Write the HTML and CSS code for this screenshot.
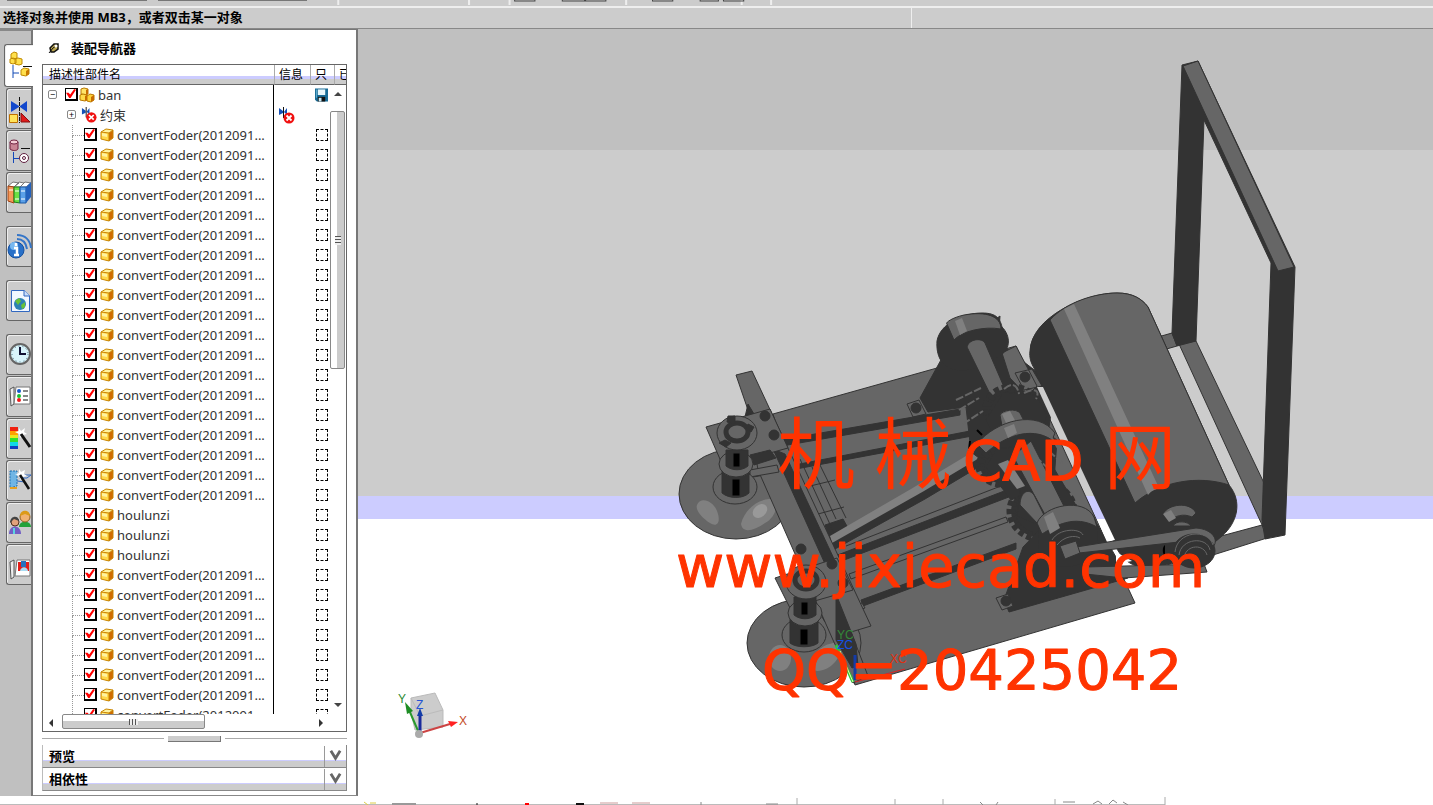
FILE: index.html
```html
<!DOCTYPE html>
<html lang="zh-CN">
<head>
<meta charset="utf-8">
<title>装配导航器</title>
<link rel="stylesheet" href="styles.css">
<script src="script.js" defer></script>
</head>
<body>
<svg class="sprites" aria-hidden="true">
  <symbol id="cube" viewBox="0 0 14 14">
    <path d="M1 4 6 1l7 1-4 3z" fill="#fff3a0"/><path d="M1 4l8 1v8l-8-2z" fill="#ffd84a"/><path d="M9 5l4-3v8l-4 3z" fill="#d06a00"/>
    <path d="M1 4 6 1l7 1v8l-4 3-8-2zM1 4l8 1 4-3M9 5v8" fill="none" stroke="#c98500"/>
    <path d="M2 5l5 1v3l-5-1z" fill="#fff3a0"/>
  </symbol>
  <symbol id="cubes" viewBox="0 0 16 16">
    <g stroke="#b87800"><path d="M2 2l3-1 4 1v5l-2 1-5-1z" fill="#ffe46a"/><path d="M1 8l3-1 4 1v5l-2 1-5-1z" fill="#ffdb4a"/><path d="M8 9l3-2 4 1v5l-3 2-4-1z" fill="#ffd23a"/></g>
    <path d="M7 3l2-1v5l-2 1zM6 9l2-1v5l-2 1zM12 10l3-2v5l-3 2z" fill="#c86c00"/>
  </symbol>
  <symbol id="constraint" viewBox="0 0 17 17">
    <path d="M1 1l4 3v2l-4 2zM9 1v7L6 5z" fill="#1450b8"/><path d="M5.500 0v11" stroke="#111" fill="none"/>
    <circle cx="11" cy="11" r="5.500" fill="#f01010"/><path d="M8.500 8.500l5 5m0-5l-5 5" stroke="#fff" stroke-width="1.800"/>
  </symbol>
  <symbol id="disk" viewBox="0 0 14 14">
    <path d="M0 0h14v14H2l-2-2z" fill="#176b96"/><path d="M3 1h8v6H3z" fill="#e8f7fb"/><path d="M3 9h8v5H3z" fill="#111"/><path d="M4 10h3v4H4z" fill="#c8e8f2"/><path d="M1 1h1v9H1z" fill="#69b4d4"/>
  </symbol>
  <symbol id="chevron" viewBox="0 0 14 12"><path d="M2 1l5 8 5-8" fill="none" stroke="#666" stroke-width="3"/></symbol>
</svg>

<div class="toolbar"><span class="combo"></span><span class="combo combo-wide"></span>
  <svg class="toolbar-marks" viewBox="0 0 1100 5" preserveAspectRatio="xMinYMin slice" aria-hidden="true"><path d="M20 0v5M149 0v5M189 0v5M304 0v5M418 0v5M447 0v5" stroke="#eee" stroke-width="2"/><path d="M194 0v1h20V0M241 0v1h22V0M264 0v1h20V0M330 0v1h20V0M377 0v1h18V0M400 0v1h20V0" fill="none" stroke="#444"/></svg>
</div>
<div class="status"><span class="prompt">选择对象并使用 MB3，或者双击某一对象</span><span class="status-right"></span></div>

<main class="workspace">
  <nav class="rail">
    <button class="tab active" aria-label="装配导航器"><svg viewBox="0 0 26 30"><path d="M5 14v13M5 22h6" stroke="#124bb5" fill="none"/><path d="M15 15.500h9" stroke="#111"/><g stroke="#c08a00" fill="#ffe04c"><path d="M3 3l3-2 3 1v5l-3 1-3-1zM7 8l3-1 4 1v5l-3 1-4-1zM2 8l3-1 3 1v4l-3 1-3-1zM13 19l3-2 5 1v5l-3 2-5-1z"/></g><path d="M18 20l3-2v5l-3 2z" fill="#c87800"/></svg></button>
    <button class="tab" aria-label="约束导航器"><svg viewBox="0 0 26 30"><path d="M4 7l8 5v1l-8 5zM20 7v11l-7-5v-1z" fill="#1248cc"/><path d="M12.500 3v26" stroke="#111" stroke-dasharray="4 1"/><path d="M2.500 20.500h8v8h-8z" fill="#ffe45a" stroke="#c07000"/><path d="M14 19v9h9z" fill="#e01a1a" stroke="#811"/></svg></button>
    <button class="tab" aria-label="部件导航器"><svg viewBox="0 0 26 30"><path d="M3 6v7c2 2 7 2 8 0V6" fill="#c88494" stroke="#702040"/><ellipse cx="7" cy="6" rx="4" ry="2" fill="#f4cdd6" stroke="#702040"/><path d="M14 12.500h9" stroke="#111"/><path d="M6.500 16v11M7 22.500h5" stroke="#1448b8" fill="none"/><circle cx="17" cy="22" r="4.500" fill="#fff" stroke="#602040"/><circle cx="17" cy="22" r="1.500" fill="none" stroke="#602040"/></svg></button>
    <button class="tab" aria-label="重用库"><svg viewBox="0 0 26 30"><path d="M1 8l5-4 6 1-5 4zM7 9l5-5 5 1-4 4zM13 9l5-5 6 1-5 4z" fill="#fff" stroke="#777"/><path d="M1 8l6 1v16l-6-2z" fill="#f59a5a" stroke="#a04010"/><path d="M7 9h6v16l-6-1z" fill="#6be044" stroke="#188018"/><path d="M13 9h6v16h-6z" fill="#5ba0e8" stroke="#1b58a4"/><path d="M19 9l5-5v15l-5 6z" fill="#2462bd"/><path d="M2 12h4m2 1h4m2 0h4m-4 8h4M8 21h4" stroke="#fff"/></svg></button>
    <button class="tab spaced" aria-label="HD3D 工具"><svg viewBox="0 0 26 30"><circle cx="9" cy="18" r="8" fill="#2870c8" stroke="#1550a0"/><circle cx="7" cy="14" r="4" fill="#77b8f0"/><path d="M9 11v3M7 16h3v7M7 23h5" stroke="#fff" stroke-width="2.500" fill="none"/><path d="M10 7c6 0 9 4 10 10M10 3c8 0 13 5 14 13" stroke="#3475c8" stroke-width="2" fill="none"/></svg></button>
    <button class="tab spaced" aria-label="Web 浏览器"><svg viewBox="0 0 26 30"><path d="M4.500 4.500h13l5 5v16h-18z" fill="#f0f7ff" stroke="#3268c0"/><path d="M17 4v6h6" fill="#c8dcf8" stroke="#3268c0"/><circle cx="13" cy="18" r="6" fill="#2d82b4"/><path d="M8 15l4-3 2 3-3 4zM14 19l4-3v5l-3 2z" fill="#68c238"/></svg></button>
    <button class="tab spaced" aria-label="历史记录"><svg viewBox="0 0 26 30"><circle cx="13" cy="14" r="10" fill="#d8f4fb" stroke="#666" stroke-width="2"/><circle cx="13" cy="14" r="8" fill="none" stroke="#467" stroke-dasharray="1 3"/><path d="M13 7v7h6" stroke="#113" stroke-width="2" fill="none"/></svg></button>
    <button class="tab" aria-label="系统材料"><svg viewBox="0 0 26 30"><path d="M3 7l4-2v17l-3 2z" fill="#eee" stroke="#555"/><path d="M9 5h14v17H7z" fill="#fff" stroke="#777"/><circle cx="12" cy="9" r="2" fill="#1459ca"/><circle cx="12" cy="14" r="2" fill="#18c030"/><circle cx="12" cy="18" r="2" fill="#f01818"/><path d="M16 9h5m-5 5h5m-5 4h5" stroke="#111"/></svg></button>
    <button class="tab" aria-label="可视化模板"><svg viewBox="0 0 26 30"><path d="M3 3h8v5H3z" fill="#f02010"/><path d="M3 7h8v4H3z" fill="#ffa000"/><path d="M3 11h8v4H3z" fill="#e8e820"/><path d="M3 14h8v4H3z" fill="#30e030"/><path d="M3 18h8v4H3z" fill="#10d8e8"/><path d="M3 22h8v3H3z" fill="#1040c0"/><path d="M12 4l2 3 4-3-1 4 3 2-4 1-3 3-1-4-4-2 4-1z" fill="#fff"/><path d="M14 10l9 13" stroke="#111" stroke-width="3"/></svg></button>
    <button class="tab" aria-label="加工向导"><svg viewBox="0 0 26 30"><path d="M3 5h7v15l-7 2z" fill="#70b5e4" stroke="#1e70b0" stroke-dasharray="2 1"/><path d="M11 9h13l-4 3h-8M10 15l8 1" stroke="#3068c0" fill="none"/><path d="M12 3l2 3 4-2-1 4 3 2-4 1-3 3-1-4-4-2 4-1z" fill="#fff"/><path d="M13 9l9 14" stroke="#111" stroke-width="2.500"/><path d="M3 22h7" stroke="#e7a020" stroke-width="2"/></svg></button>
    <button class="tab" aria-label="角色"><svg viewBox="0 0 26 30"><path d="M12 19c0-7 12-7 12 0z" fill="#23a23a"/><circle cx="18" cy="9" r="5" fill="#f0b272" stroke="#956020"/><path d="M13 8c0-7 10-7 10 0l-5-2z" fill="#dc9a18"/><path d="M2 26c0-10 12-10 12 0z" fill="#725fc4"/><path d="M7 20v6" stroke="#5bd4e0" stroke-width="2"/><circle cx="8" cy="14" r="4" fill="#e2a27c" stroke="#523020"/><path d="M3 15c0-8 9-8 9-2l-5-2z" fill="#444"/></svg></button>
    <button class="tab" aria-label="系统场景"><svg viewBox="0 0 26 30"><path d="M3 12l4-2v17l-3 2z" fill="#eee" stroke="#555"/><path d="M10 10h13v16H8z" fill="#fff" stroke="#777"/><path d="M11 12h11v9H11z" fill="#e31d18"/><path d="M14 11h5v6h-5z" fill="#2671bd"/><path d="M13 21c1-5 7-5 8 0z" fill="#a8ddf4"/></svg></button>
  </nav>

  <section class="panel">
    <h1 class="panel-title"><svg viewBox="0 0 12 12" aria-hidden="true"><path d="M2 6l4-4h4v5L6 10H3z" fill="#bba650" stroke="#111" stroke-width="1.500"/><path d="M1 11l4-5 3-2" stroke="#111" fill="none"/><circle cx="8" cy="4" r="1.500" fill="#fff"/></svg>装配导航器</h1>
    <div class="tree-box">
      <div class="tree-view">
        <table class="tree">
          <colgroup><col class="c-name"><col class="c-info"><col class="c-read"><col></colgroup>
          <thead><tr><th>描述性部件名</th><th>信息</th><th>只</th><th>已</th></tr></thead>
          <tbody id="rows"></tbody>
        </table>
        <div class="vscroll"><button class="arrow up" aria-label="向上"></button><div class="vthumb"><i></i></div><button class="arrow down" aria-label="向下"></button></div>
      </div>
      <div class="hscroll"><button class="arrow left" aria-label="向左"></button><div class="htrack"><div class="hthumb"><i></i></div></div><button class="arrow right" aria-label="向右"></button></div>
    </div>
    <div class="splitter"><span></span><b></b><span></span></div>
    <div class="sections">
      <button class="section"><span>预览</span><svg><use href="#chevron"/></svg></button>
      <button class="section"><span>相依性</span><svg><use href="#chevron"/></svg></button>
    </div>
  </section>

  <section class="viewport">
    <svg class="scene" viewBox="358 29 1075 768" preserveAspectRatio="xMinYMin meet">
      <!-- handle frame -->
      <g class="edge">
        <path class="m" d="M1179 344l17-3 68 142-1 44z"/>
        <path class="m" d="M1158 337l14-4 5 13-14 4zM1210 539l52-14 5 13-54 17z"/>
        <path class="d" d="M1182 65l16-4 97 206-10 268-20 4-3-19 9-257-67-143-8 221-19 5-5-13z"/>
        <path class="m" d="M1183 66l15-5 96 206-16 4z"/>
      </g>
      <!-- base plate -->
      <g class="edge">
        <path class="m" d="M773 414l164-46 79-22 119 257-58 17-222 65z"/>
        <circle class="d" cx="916" cy="408" r="5"/><path class="n" d="M907 404l12-4 7 14-13 3z"/>
      </g>
      <!-- front wheels -->
      <g class="edge">
        <ellipse class="m" cx="736" cy="494" rx="57" ry="45"/><ellipse class="m" cx="804" cy="643" rx="57" ry="44"/>
      </g>
      <g class="h"><path d="M697 505c4-9 16-4 20 6s1 17-7 12-15-13-13-18zM741 524c3-13 15-24 28-25 12-1 8 18-4 24-9 6-22 12-24 1z"/><ellipse cx="780" cy="658" rx="11" ry="13"/><path d="M811 665c2-14 15-23 26-22 9 7-2 24-14 27-7 2-12 1-12-5z"/></g>
      <ellipse cx="760" cy="511" rx="8" ry="6" fill="#999" transform="rotate(-40 760 511)"/>
      <!-- rods and belts -->
      <g class="edge">
        <path class="n" d="M806 487l29-7M818 514l26-7M819 463l27 55M812 467l24 52"/>
        <path class="d" d="M825 525l18-6 5 9-18 12z"/>
        <path class="d" d="M780 440l180-31v6l-178 31zM748 474l222-43 2 5-224 42zM835 556l177-68 2 7-175 67zM861 600l155-57v6l-153 57z"/>
        <path class="d" d="M832 540l85-45 86-52 4 7-82 49-90 50z"/>
        <path class="h" d="M830 536l81-47 90-54 5 7-82 49-92 52z"/>
        <path class="m" d="M849 574l157-57 2 5-157 57zM822 617l40-14 3 5-40 14z"/>
        <path class="n" d="M846 546l160-62"/>
      </g>
      <!-- left rail -->
      <g class="edge">
        <path class="m" d="M736 375l16-4 119 255-20 6 17 44-15 7-20-43-75-170-10-60z"/>
        <path class="d" d="M773 449l12 5 50 107-9 5zM836 594l20 50 2 22-6 2-16-28zM748 404l9 15-12-2z"/>
        <path class="n" d="M800 459l34 74"/>
      </g>
      <!-- caster heads -->
      <g class="edge">
        <path class="m" d="M706 427l64-18 18 39-65 18z"/><circle class="d" cx="765" cy="416" r="5"/><circle class="d" cx="774" cy="435" r="5"/>
        <path class="d" d="M750 455l20-5 6 8-22 7z"/>
        <path class="m" d="M750 470l27-5 2 7-29 5z"/>
        <ellipse class="m" cx="735" cy="487" rx="22" ry="17"/><path class="d" d="M722 470h27v23c-6 6-20 6-27 0z"/>
        <ellipse class="m" cx="736" cy="464" rx="17" ry="13"/><path class="d" d="M726 450h22v16c-6 5-16 5-22 0z"/>
        <path d="M733 453h7v14h-7zM732 479h8v17h-8z" fill="#000"/>
        <ellipse class="m" cx="737" cy="433" rx="20" ry="17"/><ellipse class="n heavy" cx="737" cy="432" rx="11" ry="9"/><path class="d" d="M728 416h7v8l-8-2zM748 424l6 3-3 5-5-3zM725 440l-6 3 7 4 5-4z"/>
      </g>
      <g class="edge">
        <path class="m" d="M775 578l62-20 16 32-63 18z"/><circle class="d" cx="801" cy="549" r="5"/><circle class="d" cx="832" cy="564" r="5"/><circle class="d" cx="843" cy="583" r="5"/>
        <ellipse class="m" cx="804" cy="635" rx="22" ry="17"/><path class="d" d="M790 618h28v25c-6 5-22 5-28 0z"/>
        <ellipse class="m" cx="805" cy="613" rx="17" ry="13"/><path class="d" d="M794 597h22v18c-6 5-16 5-22 0z"/>
        <path d="M801 602h7v13h-7zM800 629h8v16h-8z" fill="#000"/>
        <ellipse class="m" cx="806" cy="582" rx="20" ry="17"/><ellipse class="n heavy" cx="806" cy="580" rx="11" ry="9"/>
      </g>
      <!-- upper bearing, shafts and gears -->
      <g class="edge">
        <path class="d" d="M942 358l-22 40 8 14 38-5 5 45 32 24 42-20 7-50-10-30-36-28-8-4 2-28z"/>
        <path class="m" d="M1002 353l14-7 21 40-10 10-17-18zM1015 373l17-4 10 17-18 4z"/><circle class="d" cx="1025" cy="377" r="5"/>
        <path class="d" d="M937 341c3-17 25-28 45-28 15 0 18 6 20 14 9 9 8 22 0 27-14 9-28 18-45 16-16-2-21-15-20-29z"/>
        <path class="m" d="M954 340c8-9 30-14 47-11 0-13-15-18-37-14-13 3-19 8-17 9z"/>
        <path class="h" d="M955 321l7-3 5 13-7 4z"/>
        <path class="m" d="M967 347c2-9 16-9 18-4l22 51-14 6z"/>
      </g>
      <g class="gear">
        <ellipse cx="1012" cy="408" rx="25" ry="20"/><ellipse cx="1002" cy="466" rx="22" ry="17"/><ellipse cx="1042" cy="511" rx="31" ry="27"/>
      </g>
      <g class="edge">
        <path class="d" d="M1004 392l32 3 11 20-11 31-36 2-14-28zM1003 438l31-14 23 16-3 41-43 19-25-33zM1022 472l27-12 31 52-28 19-35-15z"/>
        <path class="m" d="M1000 415c2-5 16-7 20-2l9 18-25 6z"/><path class="h" d="M1002 414l8-3 9 17-9 4z"/>
        <path class="m" d="M977 444c19-24 61-35 78-11l-3 7c-22-15-50-2-66 13z"/><path class="h" d="M1004 428l10-4 3 9-9 5z"/>
        <path class="m" d="M1013 456l18-15 39 77-15 15z"/><path class="h" d="M998 464l10-4 17 26-8 3z"/>
        <path class="m" d="M1020 505c0-12 8-18 14-10l11 22-8 6z"/>
      </g>
      <path class="strands" d="M956 400l25-12M959 410l20-12M963 424l20-13M1028 450l22 20M1025 460l19 19M1050 435l9 15M1049 451l14 13"/>
      <path class="strands" d="M1004 389c8-7 13-5 15 5M1024 393c12-6 16-2 12 6"/>
      <path d="M977 430l5 5m-12 6l-2 18" fill="none" stroke="#000" stroke-width="2"/>
      <!-- lower bearing -->
      <g class="edge">
        <path class="d" d="M1023 547l-19 53 5 12 119-34-31-54-38-14z"/>
        <path class="m" d="M996 598l12-4 5 12-11 4z"/><circle class="d" cx="1006" cy="601" r="5"/>
        <path class="d" d="M1038 523c9-18 42-24 56-6 6 11 5 36-6 43-19 12-44 7-49-6z"/>
        <path class="m" d="M1037 523c7-18 47-26 57-6l3 10c-23-13-42-1-55 7z"/><path class="h" d="M1044 517l9-5 7 16-10 6z"/>
        <path class="n light" d="M1052 540c7-12 28-12 31-5M1057 545c7-9 18-10 23-7"/>
      </g>
      <!-- motor drum -->
      <g class="edge">
        <path class="d" d="M1030 351c1-33 54-58 87-58 16 0 25 6 31 14l81 178c14 17 8 38-7 51-19 17-43 29-70 31-18 2-29-6-36-20L1034 368c-3-5-5-11-4-17z"/>
        <path class="m" d="M1050 320c16-18 46-27 67-27 16 0 25 6 31 14l81 178c-30-10-69-4-94 18z"/>
        <path class="h" d="M1064 309l10-5 85 184c-5 2-8 3-11 7z"/>
        <path class="m" d="M1163 514c5-10 27-13 33-1l-4 4c-9-4-17-1-23 4z"/><path class="h" d="M1163 514l8-4 5 8-7 4z"/>
        <path class="m" d="M1173 526c3-6 15-5 18 0z"/>
      </g>
      <path d="M1037 387h6l51 109h-7z" fill="#ccc"/><path d="M1087 496h7l11 23h-8z" fill="#ccf"/><path d="M1097 519h8l10 21-8 2z" fill="#fff"/>
      <path d="M1116 552l16 9-16 3z" fill="#fff"/>
      <!-- drive belt -->
      <g class="edge">
        <path class="m" d="M1070 548l126-20c17 1 24 13 16 20l-6-9-127 14zM1085 567l119-3 3 8-83 6-39-4z"/>
        <ellipse class="d" cx="1194" cy="551" rx="21" ry="17"/><path class="n light" d="M1175 552c2-21 33-24 38-7M1179 555c2-17 28-19 31-5M1184 557c3-13 20-13 23-2"/>
        <path class="m" d="M1060 546l16-5 4 12-15 6z"/>
        <path d="M1165 545c-3 2-3 9 0 11z" fill="#000" class="black"/>
      </g>
      <!-- work axes -->
      <path d="M853 682l-17-37" stroke="#2bc838" stroke-width="3"/><path d="M853 682l-13-31" stroke="#e6ffb0"/><path d="M855 680v-25" stroke="#143ba8" stroke-width="3"/><path d="M855 682l50-13" stroke="#d22"/>
      <g class="axis-label"><text x="837" y="639" fill="#338838">YC</text><text x="837" y="649" fill="#1450e8">ZC</text><text x="890" y="663" fill="#e03010">XC</text></g>
      <!-- view triad -->
      <path d="M411 698l24-5 8 17v17l-28 3-4-18z" fill="#ccc" stroke="#bbb"/><path d="M411 698l9 18 23-6M420 716v13" fill="none" stroke="#bbb"/>
      <path d="M419 733l-10-23" stroke="#2a9a2e" stroke-width="2"/><path d="M405 702l8 9-6 3z" fill="#1d8d24"/>
      <path d="M420 733l30-9" stroke="#c44" stroke-width="2"/><path d="M458 722l-10-1 3 6z" fill="#f22"/>
      <path d="M420 732v-18" stroke="#1a2a9c" stroke-width="3"/><path d="M420 708l3 8h-6z" fill="#123ca8"/><circle cx="419" cy="734" r="4" fill="#aaa"/>
      <g class="triad-label"><text x="398" y="703" fill="#2c8a30">Y</text><text x="416" y="709" fill="#2453d4">Z</text><text x="459" y="725" fill="#c44a28">X</text></g>
      <!-- watermark -->
      <g class="watermark"><text class="han" x="777" y="483">机</text><text class="han" x="874" y="483">械</text><text class="cad" x="963" y="480">CAD</text><text class="wang" x="1104" y="483">网</text>
        <text class="site" x="676" y="587">www.jixiecad.com</text><text class="qq" x="762" y="689">QQ=20425042</text></g>
    </svg>
  </section>
</main>
<footer class="bottom-strip"><svg viewBox="0 0 1433 8" preserveAspectRatio="xMinYMax slice" aria-hidden="true"><path d="M0 7.500h1165" stroke="#bbb"/><path d="M392 6h24v2h-24z" fill="#999"/><path d="M364 5l4 3m2-2h6" stroke="#dc4"/><path d="M477 6v2" stroke="#111"/><path d="M525 7h4" stroke="#f00" stroke-width="2"/><path d="M576 7h8" stroke="#111" stroke-width="2"/><path d="M600 6h18m14 0h18" stroke="#c99"/><path d="M797 1v7m98-6v6m48-6v6m112-6v6m110-8v8" stroke="#aaa"/><path d="M701 5v3m65-1h12m202-2l3 3m15-3l-2 3M1063 5h12m18 2l5-3 4 3m7 0l4-4 4 3m6-1l5 3" stroke="#888" fill="none"/></svg></footer>
</body>
</html>
```
FILE: styles.css
```css
* { box-sizing: border-box; }
body { margin: 0; height: 100vh; display: flex; flex-direction: column; overflow: hidden; background: #fff; color: #333; font: 13px/20px "Noto Sans", "Noto Sans CJK SC", sans-serif; }
button { font: inherit; color: inherit; padding: 0; margin: 0; border: 0; background: none; }
.sprites { display: none; }

.toolbar { flex: none; height: 6px; display: flex; gap: 11px; padding-left: 7px; background: #ccc; }
.combo { width: 140px; height: 1px; background: #777; }
.combo-wide { width: 149px; }
.toolbar-marks { flex: 1; min-width: 0; height: 5px; }
.status { flex: none; height: 23px; display: flex; align-items: stretch; background: #ccc; border-top: 2px solid #eee; border-bottom: 1px solid #888; color: #000; font-weight: bold; }
.prompt { flex: 0 0 912px; padding-left: 3px; line-height: 18px; border-right: 1px solid #eee; }

.workspace { flex: 1; min-height: 0; display: grid; grid-template-columns: 33px 325px minmax(0, 1fr); }
.rail { background: #c0c0c0; border-top: 2px solid #888; border-right: 2px solid #777; display: flex; flex-direction: column; align-items: flex-end; gap: 1px; padding-top: 13px; margin-bottom: 1px; }
.tab { flex: none; width: 25px; height: 41px; background: #ccc; border: 1px solid #666; border-right: 0; border-radius: 3px 0 0 3px; box-shadow: inset 1px 1px #eee; }
.tab svg { display: block; width: 26px; height: 30px; }
.tab.active { width: 29px; height: 43px; margin-right: -2px; padding-left: 3px; background: #fff; }
.tab.spaced { margin-top: 12px; }

.panel { display: flex; flex-direction: column; min-height: 0; padding: 0 9px 4px; margin-bottom: 1px; border-top: 1px solid #777; border-right: 2px solid #777; border-bottom: 1px solid #888; background: #fff; }
.panel-title { flex: none; height: 34px; margin: 0; padding: 8px 0 0 6px; display: flex; align-items: flex-start; gap: 11px; font-size: 13px; line-height: 20px; color: #000; }
.panel-title svg { width: 12px; height: 12px; margin-top: 4px; }
.tree-box { flex: 1; min-height: 0; display: flex; flex-direction: column; border: 1px solid #666; }
.tree-view { flex: 1; min-height: 0; position: relative; overflow: hidden; }
.tree { width: 100%; table-layout: fixed; border-collapse: separate; border-spacing: 0; }
.tree .c-name { width: 231px; } .tree .c-info { width: 36px; } .tree .c-read { width: 24px; }
.tree th { height: 20px; padding: 0 0 0 6px; overflow: hidden; text-align: left; white-space: nowrap; font-size: 12px; line-height: 19px; font-weight: normal; color: #000; background: linear-gradient(#fff 0 11px, #ccf 11px 14px, #ccc 14px); border-bottom: 1px solid #666; }
.tree th + th { padding-left: 4px; border-left: 1px solid #aaa; }
.tree td { height: 20px; padding: 0; vertical-align: top; }
.tree td:first-child { border-right: 1px solid #000; }
.node { display: flex; align-items: center; height: 19px; white-space: nowrap; }
.node svg { flex: none; width: 14px; height: 14px; margin: 0 3px; }
.node .wide { width: 16px; height: 16px; margin: 0 3px 0 1px; }
.stem { flex: none; align-self: flex-start; width: 41px; height: 20px; padding-left: 29px; }
.stem::before { content: ""; display: block; height: 10px; border-left: 1px dotted #999; border-bottom: 1px dotted #999; }
.stem::after { content: ""; display: block; height: 10px; border-left: 1px dotted #999; }
.twist { flex: none; width: 9px; height: 9px; border: 1px solid #888; border-radius: 2px; line-height: 7px; font-size: 9px; text-align: center; color: #000; margin-left: 5px; }
.twist + input { margin-left: 8px; }
.twist.deep { margin-left: 24px; margin-right: 4px; }
.check { appearance: none; flex: none; width: 13px; height: 13px; margin: 0; border: 2px solid #000; border-width: 1px 2px 2px 1px; background: #fff; }
.check::before { content: ""; display: block; width: 10px; height: 9px; background: #f00; clip-path: polygon(0 42%, 26% 42%, 42% 62%, 82% 0, 100% 8%, 46% 100%, 32% 100%); }
.read { appearance: none; display: block; width: 12px; height: 12px; margin: 4px 0 0 6px; border: 1px dashed #000; }
.info { display: block; width: 17px; height: 17px; margin: 2px 0 0 4px; }
.disk { display: block; width: 13px; height: 14px; margin: 3px 0 0 5px; }

.vscroll { position: absolute; top: 20px; right: 0; bottom: 0; width: 17px; display: flex; flex-direction: column; align-items: center; background: #fff; }
.vthumb { flex: 0 0 258px; width: 15px; margin-top: 8px; display: flex; align-items: center; justify-content: center; border: 1px solid #888; border-radius: 2px; background: linear-gradient(90deg, #fff 0 6px, #ccc 6px); }
.vthumb i { width: 6px; height: 9px; background: repeating-linear-gradient(#555 0 1px, #eee 1px 3px); }
.arrow { flex: none; width: 16px; height: 18px; display: grid; place-items: center; }
.arrow::before { content: ""; border: 4px solid transparent; }
.up::before { border-bottom-color: #444; border-top: 0; } .down::before { border-top-color: #444; border-bottom: 0; } .left::before { border-right-color: #333; border-left: 0; } .right::before { border-left-color: #333; border-right: 0; }
.down { margin-top: auto; }
.hscroll { flex: none; height: 17px; display: flex; padding-right: 17px; }
.htrack { flex: 1; padding-left: 3px; }
.hthumb { width: 143px; height: 15px; display: flex; align-items: center; justify-content: center; border: 1px solid #888; border-radius: 2px; background: linear-gradient(#fff 0 6px, #ccc 6px); }
.hthumb i { width: 9px; height: 6px; background: repeating-linear-gradient(90deg, #555 0 1px, #eee 1px 3px); }
.splitter { flex: none; height: 13px; display: grid; grid-template-columns: 122px 53px 1fr; column-gap: 4px; padding-top: 4px; }
.splitter span { height: 1px; margin-top: 2px; background: #aaa; }
.splitter b { height: 6px; background: #ccc; border-right: 1px solid #777; border-bottom: 1px solid #777; }
.sections { flex: none; }
.section { width: 100%; height: 23px; display: flex; align-items: center; justify-content: space-between; background: linear-gradient(#fff 0 15px, #ccf 15px 16px, #ccc 16px); border: 1px solid #888; border-top: 0; border-left-color: #bbb; color: #000; font-weight: bold; }
.section span { padding-left: 6px; line-height: 20px; }
.section svg { width: 22px; height: 21px; padding: 3px 4px 5px; border-left: 1px solid #999; }

.viewport { min-height: 0; overflow: hidden; background: linear-gradient(#c0c0c0 0 121px, #ccc 121px 467px, #ccf 467px 490px, #fff 490px); }
.scene { display: block; width: 100%; height: 100%; }
.m { fill: #666; } .d { fill: #333; } .h { fill: #808080; } .n { fill: none; }
.edge { stroke: #333; stroke-width: 1; }
.edge .h, .edge .black { stroke: none; }
.edge .heavy { stroke-width: 5; } .edge .light { stroke: #666; }
.gear { fill: #333; stroke: #333; stroke-width: 9; stroke-dasharray: 5 3; }
.strands { fill: none; stroke: #666; stroke-width: 2; stroke-dasharray: 8 2; }
.axis-label, .triad-label { font: 12px "Liberation Sans", sans-serif; }
.watermark { fill: #f30; stroke: #f30; stroke-width: 1; stroke-linejoin: round; font-family: "DejaVu Sans", "Noto Sans CJK SC", sans-serif; }
.han, .wang { font-family: "Noto Sans CJK SC", sans-serif; stroke: none; }
.han { font-size: 78px; } .wang { font-size: 72px; }
.cad, .qq { font-size: 56px; }
.site { font-size: 59px; }
.bottom-strip { flex: none; height: 8px; background: #fff; }
.bottom-strip svg { display: block; width: 100%; height: 8px; }
```
FILE: script.js
```js
const part = "convertFoder(2012091...";
const names = [
  ...Array(19).fill(part),
  "houlunzi", "houlunzi", "houlunzi",
  ...Array(8).fill(part),
];

const read = '<input type="checkbox" class="read" aria-label="只读">';
const row = (name, info, flag) => `<tr><td>${name}</td><td>${info}</td><td>${flag}</td><td></td></tr>`;

const rows = [
  row('<div class="node"><span class="twist">−</span><input type="checkbox" class="check" checked aria-label="ban"><svg class="wide"><use href="#cubes"/></svg>ban</div>',
    "", '<svg class="disk"><use href="#disk"/></svg>'),
  row('<div class="node"><span class="twist deep">+</span><svg class="wide"><use href="#constraint"/></svg>约束</div>',
    '<svg class="info"><use href="#constraint"/></svg>', ""),
  ...names.map((name) => row(
    `<label class="node"><span class="stem"></span><input type="checkbox" class="check" checked><svg><use href="#cube"/></svg>${name}</label>`,
    "", read)),
];

document.getElementById("rows").innerHTML = rows.join("");
```
